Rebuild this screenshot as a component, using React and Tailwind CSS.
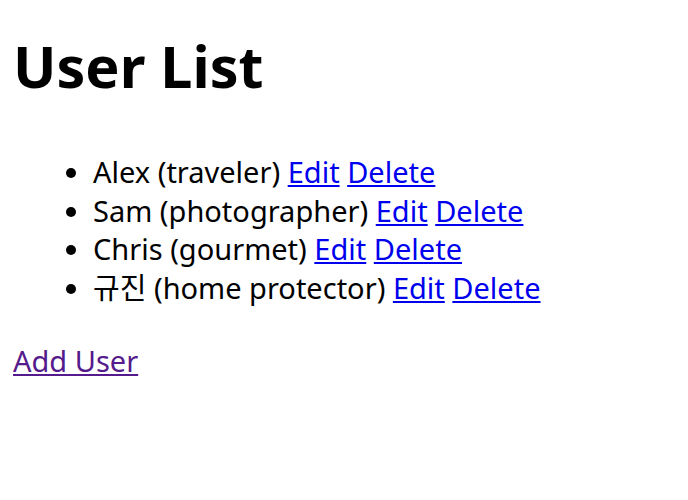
export default function App() {
  const users = [
    { name: 'Alex', role: 'traveler' },
    { name: 'Sam', role: 'photographer' },
    { name: 'Chris', role: 'gourmet' },
    { name: '규진', role: 'home protector' },
  ];

  return (
    <div className="px-[13px] py-[1px] bg-white text-black text-[29px] font-['Noto_Sans','Noto_Sans_CJK_KR',sans-serif]">
      <h1 className="text-[57.5px] font-bold leading-[78px] mt-[26px] mb-[0px]">User List</h1>
      <ul className="list-disc pl-[80px] mt-[48px] mb-[31px]">
        {users.map((u) => (
          <li key={u.name} className="leading-[38.7px]">
            {u.name} ({u.role}){' '}
            <a href="#" className="text-[#0000ee] underline">Edit</a>{' '}
            <a href="#" className="text-[#0000ee] underline">Delete</a>
          </li>
        ))}
      </ul>
      <a href="#" className="text-[#551a8b] underline">Add User</a>
    </div>
  );
}
